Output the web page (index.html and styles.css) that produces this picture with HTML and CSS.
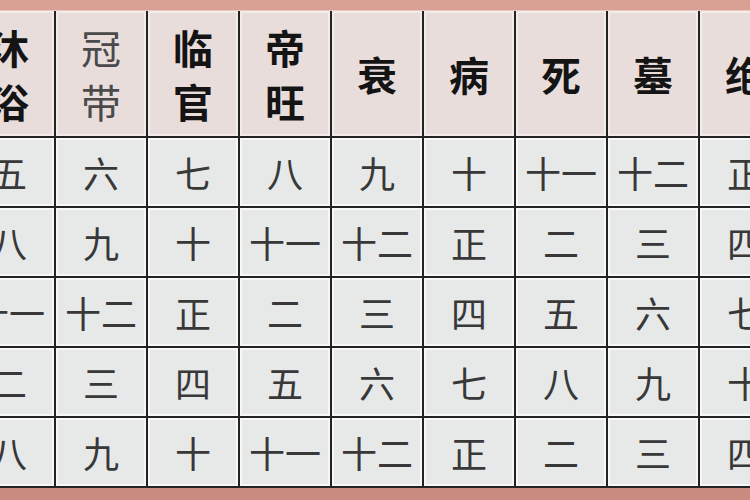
FILE: index.html
```html
<!DOCTYPE html>
<html lang="zh">
<head>
<meta charset="utf-8">
<link rel="stylesheet" href="styles.css">
</head>
<body>
<div class="page">
  <div class="band-top"></div>
  <div class="grid">
    <div class="cell head">沐<br>浴</div>
    <div class="cell head light">冠<br>带</div>
    <div class="cell head">临<br>官</div>
    <div class="cell head">帝<br>旺</div>
    <div class="cell head">衰</div>
    <div class="cell head">病</div>
    <div class="cell head">死</div>
    <div class="cell head">墓</div>
    <div class="cell head">绝</div>

    <div class="cell">五</div><div class="cell">六</div><div class="cell">七</div><div class="cell">八</div><div class="cell">九</div><div class="cell">十</div><div class="cell">十一</div><div class="cell">十二</div><div class="cell">正</div>

    <div class="cell">八</div><div class="cell">九</div><div class="cell">十</div><div class="cell">十一</div><div class="cell">十二</div><div class="cell">正</div><div class="cell">二</div><div class="cell">三</div><div class="cell">四</div>

    <div class="cell">十一</div><div class="cell">十二</div><div class="cell">正</div><div class="cell">二</div><div class="cell">三</div><div class="cell">四</div><div class="cell">五</div><div class="cell">六</div><div class="cell">七</div>

    <div class="cell">二</div><div class="cell">三</div><div class="cell">四</div><div class="cell">五</div><div class="cell">六</div><div class="cell">七</div><div class="cell">八</div><div class="cell">九</div><div class="cell">十</div>

    <div class="cell">八</div><div class="cell">九</div><div class="cell">十</div><div class="cell">十一</div><div class="cell">十二</div><div class="cell">正</div><div class="cell">二</div><div class="cell">三</div><div class="cell">四</div>
  </div>
  <div class="band-bottom"></div>
</div>
</body>
</html>
```

FILE: styles.css
```css
html, body {
  margin: 0;
  padding: 0;
  background: #c98b7f;
  overflow: hidden;
}

.page {
  width: 750px;
  height: 500px;
  overflow: hidden;
  font-family: "Noto Sans CJK SC", "Noto Sans CJK TC", sans-serif;
}

.band-top {
  height: 10px;
  background: #d8a193;
  border-bottom: 1px solid #ecc9bf;
}

.grid {
  margin-left: -36px;
  width: 826px;
  display: grid;
  grid-template-columns: repeat(9, 90px);
  grid-template-rows: 125px repeat(5, 68px);
  gap: 2px;
  background: #232323;
  padding-bottom: 2px;
}

.cell {
  box-sizing: border-box;
  border: 2px solid #f7f7f7;
  background: #e7e9e9;
  display: flex;
  align-items: center;
  justify-content: center;
  text-align: center;
  font-size: 36px;
  font-weight: 400;
  color: #383838;
  line-height: 1;
  white-space: nowrap;
}

.head {
  background: #e9dddc;
  border-color: #f3ecea;
  font-size: 40px;
  font-weight: 700;
  color: #141414;
  line-height: 54px;
}

.head.light {
  font-weight: 400;
  color: #4a4a4a;
}

.band-bottom {
  height: 12px;
  background: #c98b7f;
}
```
